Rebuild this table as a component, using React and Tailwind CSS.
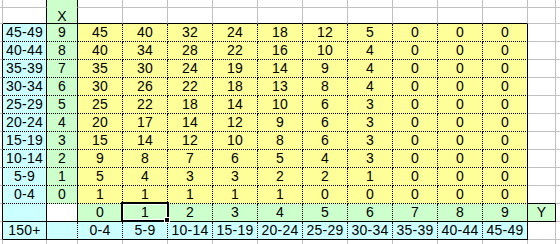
import React from "react";

const CYAN = "bg-[#ccffff]";
const GREEN = "bg-[#ccffcc]";
const YELLOW = "bg-[#ffff99]";
const WHITE = "bg-white";

const RB = {
  g: "border-r border-r-[#c0c0c0]",
  k: "border-r border-r-black",
  d: "border-r border-r-black [border-right-style:dotted]",
  n: "border-r border-r-transparent",
};
const BB = {
  g: "border-b border-b-[#c0c0c0]",
  k: "border-b border-b-black",
  d: "border-b border-b-black [border-bottom-style:dotted]",
  n: "border-b border-b-transparent",
};

const COLW = ["w-[3px]", "w-[44px]", "w-[31px]", "w-[45px]", "w-[45px]", "w-[45px]", "w-[45px]", "w-[45px]", "w-[45px]", "w-[45px]", "w-[45px]", "w-[45px]", "w-[45px]", "w-[28px]", "w-[40px]"];
const ROWH = ["h-[8px]", "h-[16px]", "h-[18px]", "h-[18px]", "h-[18px]", "h-[18px]", "h-[18px]", "h-[18px]", "h-[18px]", "h-[18px]", "h-[18px]", "h-[18px]", "h-[18px]", "h-[18px]", "h-[18px]"];

const data = [
  ["45-49", "9", [45, 40, 32, 24, 18, 12, 5, 0, 0, 0]],
  ["40-44", "8", [40, 34, 28, 22, 16, 10, 4, 0, 0, 0]],
  ["35-39", "7", [35, 30, 24, 19, 14, 9, 4, 0, 0, 0]],
  ["30-34", "6", [30, 26, 22, 18, 13, 8, 4, 0, 0, 0]],
  ["25-29", "5", [25, 22, 18, 14, 10, 6, 3, 0, 0, 0]],
  ["20-24", "4", [20, 17, 14, 12, 9, 6, 3, 0, 0, 0]],
  ["15-19", "3", [15, 14, 12, 10, 8, 6, 3, 0, 0, 0]],
  ["10-14", "2", [9, 8, 7, 6, 5, 4, 3, 0, 0, 0]],
  ["5-9", "1", [5, 4, 3, 3, 2, 2, 1, 0, 0, 0]],
  ["0-4", "0", [1, 1, 1, 1, 1, 0, 0, 0, 0, 0]],
];
const labels = ["0-4", "5-9", "10-14", "15-19", "20-24", "25-29", "30-34", "35-39", "40-44", "45-49"];

function cellSpec(r, c) {
  let bg = WHITE, rb = "g", bb = "g", t = "";
  if (c === 0) {
    if (r >= 2 && r <= 13) rb = "k";
  }
  if (c === 1) {
    if (r >= 2 && r <= 13) bg = CYAN;
    if (r <= 13) rb = "k";
    if (r === 1) bb = "k";
    if (r >= 2 && r <= 11) bb = "d";
    if (r === 12 || r === 13) bb = "k";
    if (r >= 2 && r <= 11) t = data[r - 2][0];
    if (r === 13) t = "150+";
  }
  if (c === 2) {
    if (r <= 11) bg = GREEN;
    if (r === 13) bg = CYAN;
    if (r <= 12) rb = "k";
    if (r === 13) rb = "d";
    if (r === 0) bb = "n";
    if (r === 1) bb = "k";
    if (r >= 2 && r <= 11) bb = "d";
    if (r === 12 || r === 13) bb = "k";
    if (r === 1) t = "X";
    if (r >= 2 && r <= 11) t = data[r - 2][1];
  }
  if (c >= 3 && c <= 12) {
    const j = c - 3;
    if (r >= 2 && r <= 11) bg = YELLOW;
    if (r === 12) bg = GREEN;
    if (r === 13) bg = CYAN;
    if (r >= 2 && r <= 13) rb = c === 12 ? "k" : "d";
    if (r === 1) bb = "k";
    if (r >= 2 && r <= 11) bb = "d";
    if (r === 12 || r === 13) bb = "k";
    if (r >= 2 && r <= 11) t = String(data[r - 2][2][j]);
    if (r === 12) t = String(j);
    if (r === 13) t = labels[j];
  }
  if (c === 13) {
    if (r === 12) {
      bg = GREEN;
      rb = "k";
      bb = "k";
      t = "Y";
    }
    if (r === 11) bb = "k";
  }
  return { bg, rb, bb, t };
}

export default function App() {
  const rows = [];
  for (let r = 0; r < 15; r++) {
    const cells = [];
    for (let c = 0; c < 15; c++) {
      const s = cellSpec(r, c);
      cells.push(
        <div
          key={c}
          className={`${COLW[c]} shrink-0 h-full flex justify-center overflow-hidden whitespace-nowrap leading-[17px] ${s.bg} ${RB[s.rb]} ${BB[s.bb]}`}
        >
          {s.t}
        </div>
      );
    }
    rows.push(
      <div key={r} className={`flex ${ROWH[r]}`}>
        {cells}
      </div>
    );
  }
  return (
    <div
      className="relative w-[560px] h-[244px] overflow-hidden bg-white text-black text-[14px] tracking-[0.2px]"
      style={{ fontFamily: '"Liberation Sans", Arial, sans-serif' }}
    >
      {rows}
      <div className="absolute left-[121px] top-[202px] w-[48px] h-[20px] border-2 border-black">
        <div className="w-full h-full border border-white"></div>
      </div>
      <div className="absolute left-[164px] top-[217px] w-[6px] h-[6px] bg-black border border-white"></div>
    </div>
  );
}
